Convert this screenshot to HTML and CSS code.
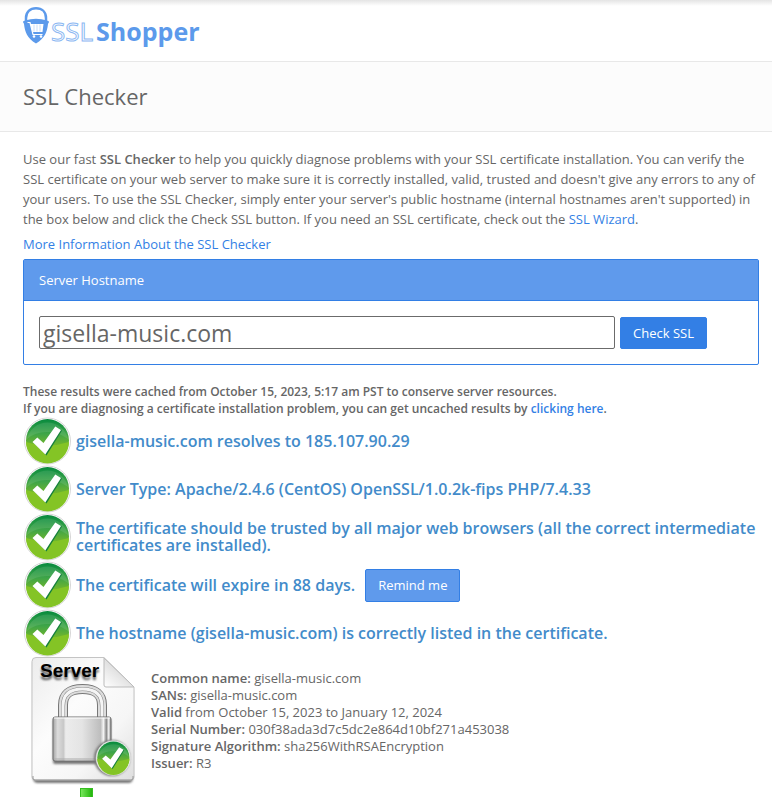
FILE: index.html
```html
<!DOCTYPE html>
<html lang="en">
<head>
<meta charset="utf-8">
<title>SSL Checker</title>
<link rel="stylesheet" href="styles.css">
</head>
<body>
<svg class="defs" aria-hidden="true">
  <defs>
    <linearGradient id="green" x1="0" y1="0" x2="0" y2="1">
      <stop offset="0" stop-color="#078a3e"/>
      <stop offset=".35" stop-color="#3fa548"/>
      <stop offset=".6" stop-color="#6fb52c"/>
      <stop offset="1" stop-color="#8cc822"/>
    </linearGradient>
    <symbol id="check" viewBox="0 0 48 48">
      <circle cx="24.500" cy="24" r="23" fill="#fff" stroke="#d6d6d6" stroke-width="1"/>
      <circle cx="24.500" cy="23.500" r="21.500" fill="url(#green)"/>
      <path d="M4 22A21 21 0 0 1 45 22Q34 14 24 15Q12 15 4 22Z" fill="#fff" opacity=".1"/>
      <path d="M3 25Q24 32 46 25A21.500 21.500 0 0 1 3 25Z" fill="#84c425"/>
      <path d="M11 26L15 22L21 27L33.500 10.500L39 13.500L23.500 38.500Z" fill="#16803c"/>
      <path d="M9.500 25L14.300 20.500L20.500 26L32.300 9.500L38 13L22.300 37.500Z" fill="#fff"/>
    </symbol>
  </defs>
</svg>

<header class="site-header">
  <a class="logo" href="#">
    <svg class="logo-mark" viewBox="0 0 26 36" aria-hidden="true">
      <path d="M3 15V11C3 5 7 1.300 13 1.300S23 5 23 11V15" fill="none" stroke="#5c9aeb" stroke-width="2.500"/>
      <path d="M0 14.500L2 13.500Q13 10 24 13.500L26 14.500C26 16 25 16 25 17C24 25 22 31 13 36.500C4 31 2 25 1 17C1 16 0 16 0 14.500Z" fill="#5c9aeb"/>
      <path d="M4.500 15.500H7L10 27.500H19.500" fill="none" stroke="#fff" stroke-width="1.200"/>
      <path d="M7.500 17H20.500L19.500 25H9.500Z" fill="#fff"/>
      <path d="M11 17.500V24.500M14 17.500V24.500M17 17.500V24.500" stroke="#a9caf5" stroke-width=".6"/>
      <circle cx="11" cy="29.500" r="1.300" fill="#fff"/>
      <circle cx="18" cy="29.500" r="1.300" fill="#fff"/>
    </svg>
    <span class="logo-ssl">SSL</span>
    <span class="logo-shopper">Shopper</span>
  </a>
</header>

<div class="title-bar"><h1>SSL Checker</h1></div>

<main>
  <p class="intro">Use our fast <b>SSL Checker</b> to help you quickly diagnose problems with your SSL certificate installation. You can verify the SSL certificate on your web server to make sure it is correctly installed, valid, trusted and doesn't give any errors to any of your users. To use the SSL Checker, simply enter your server's public hostname (internal hostnames aren't supported) in the box below and click the Check SSL button. If you need an SSL certificate, check out the <a href="#">SSL Wizard</a>.</p>
  <p class="more"><a href="#">More Information About the SSL Checker</a></p>

  <form class="panel">
    <label class="panel-head" for="hostname">Server Hostname</label>
    <div class="panel-body">
      <input id="hostname" type="text" value="gisella-music.com">
      <button class="btn btn-primary" type="button">Check SSL</button>
    </div>
  </form>

  <p class="cached">These results were cached from October 15, 2023, 5:17 am PST to conserve server resources.<br>If you are diagnosing a certificate installation problem, you can get uncached results by <a href="#">clicking here</a>.</p>

  <ul class="results">
    <li><svg class="check"><use href="#check"/></svg><span>gisella-music.com resolves to 185.107.90.29</span></li>
    <li><svg class="check"><use href="#check"/></svg><span>Server Type: Apache/2.4.6 (CentOS) OpenSSL/1.0.2k-fips PHP/7.4.33</span></li>
    <li><svg class="check"><use href="#check"/></svg><span>The certificate should be trusted by all major web browsers (all the correct intermediate certificates are installed).</span></li>
    <li><svg class="check"><use href="#check"/></svg><span>The certificate will expire in 88 days.</span><button class="btn btn-remind" type="button">Remind me</button></li>
    <li><svg class="check"><use href="#check"/></svg><span>The hostname (gisella-music.com) is correctly listed in the certificate.</span></li>
  </ul>

  <section class="cert">
    <div class="cert-art">
      <svg class="server" viewBox="0 0 128 128" role="img" aria-label="Server certificate">
        <defs>
          <linearGradient id="paper" x1="0" y1="0" x2="1" y2="1">
            <stop offset="0" stop-color="#ececec"/>
            <stop offset=".4" stop-color="#fcfcfc"/>
            <stop offset=".7" stop-color="#f6f6f6"/>
            <stop offset="1" stop-color="#dedede"/>
          </linearGradient>
          <linearGradient id="fold" x1="0" y1="1" x2=".6" y2=".3">
            <stop offset="0" stop-color="#fff"/>
            <stop offset="1" stop-color="#d8d8d8"/>
          </linearGradient>
          <linearGradient id="steel" x1="0" y1="0" x2="1" y2="0">
            <stop offset="0" stop-color="#a4a4a4"/>
            <stop offset=".08" stop-color="#dcdcdc"/>
            <stop offset=".18" stop-color="#c8c8c8"/>
            <stop offset=".22" stop-color="#ececec"/>
            <stop offset=".5" stop-color="#e4e4e4"/>
            <stop offset=".82" stop-color="#bdbdbd"/>
            <stop offset=".87" stop-color="#f4f4f4"/>
            <stop offset=".92" stop-color="#8a8a8a"/>
            <stop offset=".96" stop-color="#f2f2f2"/>
            <stop offset="1" stop-color="#808080"/>
          </linearGradient>
          <filter id="soft" x="-20%" y="-20%" width="140%" height="150%"><feGaussianBlur stdDeviation="1.300"/></filter>
        </defs>
        <path d="M15 5H86L115 33V121Q115 126 110 126H20Q15 126 15 121Z" fill="#777" filter="url(#soft)"/>
        <path d="M18 .5H86L116 30V120Q116 123 113 123H17Q14 123 14 120V4.500Q14 .5 18 .5Z" fill="url(#paper)" stroke="#c4c4c4"/>
        <path d="M15 119V121Q15 123 17 123H113Q115 123 115 121V119" fill="none" stroke="#989898"/>
        <path d="M86 1L116 30H88Q86 30 86 28Z" fill="url(#fold)" stroke="#bbb"/>
        <path d="M45 64V48Q45 32 64.500 32T84 48V64" fill="none" stroke="#777" stroke-width="10"/>
        <path d="M45 64V48Q45 32 64.500 32T84 48V64" fill="none" stroke="#dcdcdc" stroke-width="8"/>
        <path d="M45 64V49Q45 32 64.500 32T84 49V64" fill="none" stroke="#888" stroke-width="4"/>
        <path d="M45 64V49Q45 32 64.500 32T84 49V64" fill="none" stroke="#f5f5f5" stroke-width="3"/>
        <rect x="35" y="62" width="58" height="45" rx="2" fill="#777" filter="url(#soft)"/>
        <rect x="35" y="60" width="58" height="44" rx="2" fill="url(#steel)" stroke="#707070"/>
        <path d="M36 61H92" stroke="#fff"/>
        <path d="M36 102H92" stroke="#aaa"/>
        <text class="server-shadow" x="22" y="23" filter="url(#soft)">Server</text>
        <text class="server-label" x="22" y="20">Server</text>
        <circle cx="94" cy="101" r="18" fill="#777" filter="url(#soft)"/>
        <use href="#check" x="77" y="83" width="36" height="36"/>
      </svg>
      <svg class="link-top" viewBox="0 0 14 10" aria-hidden="true">
        <defs><linearGradient id="link"><stop offset="0" stop-color="#76e65a"/><stop offset="1" stop-color="#24b50c"/></linearGradient></defs>
        <path d="M0 0H13V10H0Z" fill="#35bd20"/><path d="M1 1H12V10H1Z" fill="url(#link)"/>
      </svg>
    </div>
    <div class="cert-text">
      <b>Common name:</b> gisella-music.com<br>
      <b>SANs:</b> gisella-music.com<br>
      <b>Valid</b> from October 15, 2023 to January 12, 2024<br>
      <b>Serial Number:</b> 030f38ada3d7c5dc2e864d10bf271a453038<br>
      <b>Signature Algorithm:</b> sha256WithRSAEncryption<br>
      <b>Issuer:</b> R3
    </div>
  </section>
</main>
</body>
</html>
```
FILE: styles.css
```css
* { box-sizing: border-box; }
body {
  margin: 0;
  background: #fff;
  color: #666;
  font: 13px/20px "Open Sans", sans-serif;
}
h1, p, ul { margin: 0; padding: 0; font-weight: 400; }
b { font-weight: 600; }
a { color: #337fe5; text-decoration: none; }
button, input { font: inherit; }
.defs { position: absolute; width: 0; height: 0; }

.site-header {
  height: 62px;
  padding: 7px 23px 0;
  border-bottom: 1px solid #e8e8e8;
  background: linear-gradient(#e4e4e4, #fff 6px);
}
.logo { display: inline-flex; align-items: flex-start; color: #5c9aeb; }
.logo-mark { width: 26px; height: 36px; overflow: visible; }
.logo-ssl, .logo-shopper { line-height: 36px; padding-top: 6px; }
.logo-ssl {
  margin-left: 2px;
  color: #fff;
  font-size: 26px;
  -webkit-text-stroke: 1px #8cb8f2;
}
.logo-shopper { margin-left: 3px; font-size: 25px; font-weight: 700; }

.title-bar {
  padding: 19px 23px 20px;
  border-bottom: 1px solid #e8e8e8;
  background: #fcfcfc;
}
h1 { font-size: 22px; line-height: 30px; }

main { padding: 17px 13px 0 23px; }
.intro { margin-right: -10px; padding-right: 10px; }
.more { margin-top: 5px; }

.panel { margin-top: 5px; border: 1px solid #337fe5; border-radius: 2px; }
.panel-head {
  display: block;
  padding: 10px 15px;
  border-bottom: 1px solid #337fe5;
  background: #5f9aec;
  color: #fff;
}
.panel-body { display: flex; align-items: flex-end; gap: 5px; padding: 15px; }
#hostname {
  width: 576px;
  height: 33px;
  min-width: 0;
  padding: 1px 3px;
  border: 1px solid #6b6b6b;
  border-radius: 2px;
  color: #666;
  font-size: 23px;
}
.btn {
  flex: none;
  padding: 5px 12px;
  border: 1px solid #337fe5;
  border-radius: 2px;
  background: #337fe5;
  color: #fff;
}

.cached { margin-top: 18px; font-weight: 600; font-size: 12px; line-height: 17px; }

.results { list-style: none; color: #428bca; font-size: 16px; line-height: 17px; font-weight: 600; }
.results li { display: flex; align-items: center; height: 48px; }
.check { flex: none; width: 48px; height: 48px; margin-right: 5px; }
.btn-remind { margin-left: 10px; background: #5f9aec; font-size: 13px; line-height: 21px; font-weight: 400; }

.cert { display: flex; }
.cert-art { display: flex; flex-direction: column; flex: none; width: 128px; }
.server { width: 128px; height: 128px; margin-left: -5px; }
.server text { font: 700 19px "Liberation Sans", sans-serif; }
.server-shadow { fill: #555; }
.link-top { width: 14px; height: 10px; margin: 3px 0 0 57px; }
.cert-text { padding-top: 13px; line-height: 17px; }
```
